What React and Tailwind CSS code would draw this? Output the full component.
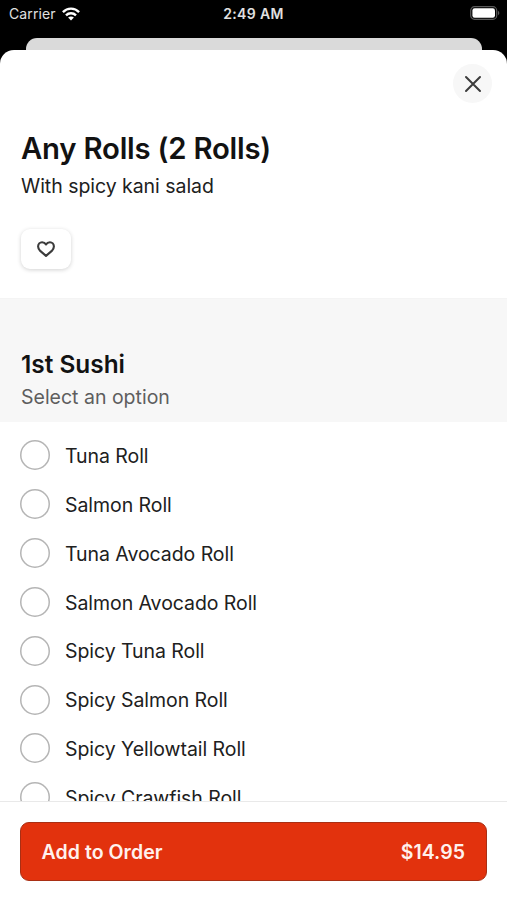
const ROLLS = [
  'Tuna Roll',
  'Salmon Roll',
  'Tuna Avocado Roll',
  'Salmon Avocado Roll',
  'Spicy Tuna Roll',
  'Spicy Salmon Roll',
  'Spicy Yellowtail Roll',
  'Spicy Crawfish Roll',
]

export default function App() {
  return (
    <div className="h-[900px] w-[507px] flex flex-col overflow-hidden bg-black font-['Inter',sans-serif] text-[#202020]">
      <StatusBar />
      {/* edge of the screen behind the sheet */}
      <div className="h-3 shrink-0 ml-[26px] mr-[25px] rounded-t-[11px] bg-[#dadada]" />
      <div className="flex-1 min-h-0 flex flex-col rounded-t-[14px] bg-white overflow-hidden">
        <div className="flex-1 min-h-0 overflow-hidden">
          <ItemHeader />
          <OptionGroup title="1st Sushi" hint="Select an option" options={ROLLS} />
        </div>
        <OrderBar price="$14.95" />
      </div>
    </div>
  )
}

function StatusBar() {
  return (
    <div className="h-[38px] shrink-0 grid grid-cols-3 items-start pt-1 pl-[9px] pr-[7px] text-[14px] leading-5 text-[#e0e0e0]">
      <div className="flex items-center gap-[6px]">
        <span className="tracking-[0.1px]">Carrier</span>
        <WifiIcon />
      </div>
      <span className="text-center font-semibold tracking-[0.35px] -ml-[2px]">2:49 AM</span>
      <div className="flex justify-end pt-[2px]">
        <BatteryIcon />
      </div>
    </div>
  )
}

function ItemHeader() {
  return (
    <div className="h-[248px] px-5 pt-[14px]">
      <div className="flex justify-end -mr-[5px]">
        <button aria-label="Close" className="size-[39px] rounded-full bg-[#f7f7f7] flex items-center justify-center">
          <svg width="18" height="18" viewBox="0 0 18 18" fill="none" stroke="#3c3c3c" strokeWidth="2" strokeLinecap="round">
            <path d="M2 2l14 14M16 2L2 16" />
          </svg>
        </button>
      </div>
      <h1 className="mt-[26px] ml-px text-[29.3px] leading-10 font-semibold tracking-[-0.22px] text-[#121212] whitespace-nowrap">Any Rolls (2 Rolls)</h1>
      <p className="mt-1 ml-px text-[19.5px] leading-[26px] tracking-[-0.04px]">With spicy kani salad</p>
      <button aria-label="Favorite" className="mt-[30px] ml-px w-[50px] h-10 rounded-[9px] bg-white flex items-center justify-center shadow-[0_1px_4px_rgba(0,0,0,0.18)]">
        <svg width="18" height="16" viewBox="0 0 18 16" fill="none" stroke="#3c3c3c" strokeWidth="2.1" strokeLinejoin="round">
          <path d="M9 14.9L3.2 9.9C1.8 8.6 1.1 7.2 1.1 5.6C1.1 3 2.8 1.2 5.1 1.2C6.8 1.2 8.2 2.1 9 3.5C9.8 2.1 11.2 1.2 12.9 1.2C15.2 1.2 16.9 3 16.9 5.6C16.9 7.2 16.2 8.6 14.8 9.9Z" />
        </svg>
      </button>
    </div>
  )
}

function OptionGroup({ title, hint, options }) {
  return (
    <section>
      <div className="h-[124px] px-[21px] pt-[50px] border-t border-[#f4f4f4] bg-[#f7f7f7]">
        <h2 className="-mt-px text-[24.4px] leading-8 font-semibold text-[#121212]">{title}</h2>
        <p className="mt-1 text-[19.5px] leading-[26px] text-[#5e5e5e]">{hint}</p>
      </div>
      <ul className="pt-[9px]">
        {options.map(name => (
          <li key={name} className="h-[48.85px] px-5 flex items-center gap-[15px]">
            <span className="size-[30px] shrink-0 rounded-full shadow-[inset_0_0_0_1.5px_#b5b5b5]" />
            <span className="pt-[1.4px] text-[19.5px] leading-[26px] tracking-[-0.06px]">{name}</span>
          </li>
        ))}
      </ul>
    </section>
  )
}

function OrderBar({ price }) {
  return (
    <div className="h-[99px] shrink-0 border-t border-[#e9e9e9] bg-white px-5 pt-5">
      <button className="w-full h-[59px] rounded-[9px] border border-[#a92f14] bg-[#e2320d] pl-[20.5px] pr-[21px] pt-[2px] flex items-center justify-between text-[19.5px] font-semibold text-[#fff1ed]">
        <span className="tracking-[0.06px]">Add to Order</span>
        <span className="tracking-[0.05px]">{price}</span>
      </button>
    </div>
  )
}

function WifiIcon() {
  return (
    <svg width="18" height="14" viewBox="0 0 18 14" fill="none" stroke="#fff" strokeWidth="2.4">
      <path d="M.9 5.1C5.4.5 12.6.5 17.1 5.1" />
      <path d="M4 8.4C6.8 5.6 11.2 5.6 14 8.4" />
      <path d="M9 13.4L6.1 10.5C7.7 9 10.3 9 11.9 10.5Z" fill="#fff" stroke="none" />
    </svg>
  )
}

function BatteryIcon() {
  return (
    <svg width="30" height="14" viewBox="0 0 30 14" fill="none">
      <rect x=".7" y=".7" width="26" height="12.6" rx="3.8" stroke="#5a5a5a" strokeWidth="1.2" />
      <rect x="2.4" y="2.3" width="22.6" height="9.4" rx="2.2" fill="#fff" />
      <path d="M28 4.8c1.8.8 1.8 3.6 0 4.4z" fill="#5a5a5a" />
    </svg>
  )
}
